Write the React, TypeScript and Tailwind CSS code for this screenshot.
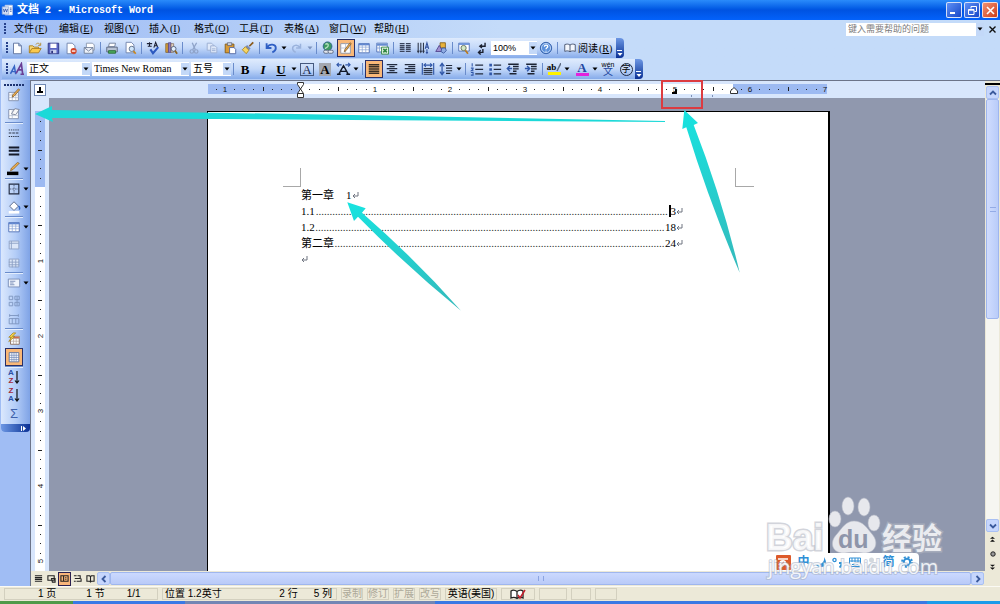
import type { ReactNode } from 'react';

const menus = [
  ['文件', 'F'],
  ['编辑', 'E'],
  ['视图', 'V'],
  ['插入', 'I'],
  ['格式', 'O'],
  ['工具', 'T'],
  ['表格', 'A'],
  ['窗口', 'W'],
  ['帮助', 'H'],
];

const INCH = 75;

function Svg({ children, size = 16 }: { children: ReactNode; size?: number }) {
  return (
    <svg width={size} height={size} viewBox="0 0 16 16" fill="none" className="block shrink-0">
      {children}
    </svg>
  );
}

const grid = 'M2 7h12M2 10h12M6 4v9M10 4v9';

const icons: Record<string, ReactNode> = {
  new: <path d="M4 2.500h6l3 3v9H4z M10 2.500v3h3" fill="#fff" stroke="#5a6f9c" />,
  open: (
    <>
      <path d="M1.500 13.500v-8h4l1.500 1.500h5v2" fill="#f6d776" stroke="#a87b1c" />
      <path d="M1.500 13.500l3-5h10.500l-3 5z" fill="#fbc94c" stroke="#a87b1c" />
      <path d="M9 4c1-2 4-2 5 .500M14.500 2v3h-3" stroke="#b58a2e" />
    </>
  ),
  save: (
    <>
      <path d="M2.500 2.500h12v12h-12z" fill="#5b66c4" stroke="#2c337f" />
      <path d="M5 3h7v5H5z" fill="#fff" />
      <path d="M5 10h7v4H5z" fill="#c9d0ee" />
      <path d="M6 11h2v3H6z" fill="#2c337f" />
    </>
  ),
  permission: (
    <>
      <path d="M3.500 2.500h6l3 3v9h-9z" fill="#fff" stroke="#6b7fa8" />
      <circle cx="11" cy="11.500" r="3.500" fill="#d2452b" />
      <path d="M9 11.500h4" stroke="#fff" strokeWidth="1.500" />
    </>
  ),
  mail: (
    <>
      <path d="M5 2.500h7l2 2v6H5z" fill="#fff" stroke="#8793aa" />
      <path d="M2.500 7.500h10v6.500h-10z" fill="#eef2fa" stroke="#6d7b96" />
      <path d="M2.500 7.500l5 4 5-4" stroke="#6d7b96" />
    </>
  ),
  print: (
    <>
      <path d="M5 2.500h7l-1 4H4z" fill="#fff" stroke="#6d7b96" />
      <path d="M2 7h12v5.500H2z" fill="#b8c3d4" stroke="#56627a" />
      <path d="M4 11h8v3H4z" fill="#4aa65a" stroke="#2b6e3a" />
    </>
  ),
  preview: (
    <>
      <path d="M3.500 1.500h6l3 3v9h-9z" fill="#fff" stroke="#6b7fa8" />
      <circle cx="10" cy="9" r="3" fill="#cfe6fb" stroke="#5c6b86" />
      <path d="M12 11.500l2.500 3" stroke="#c8861e" strokeWidth="2" />
    </>
  ),
  spell: (
    <>
      <path d="M1 3h6M4 1.500V6.500M2 6h4.500M9 7.500l2-6 2.500 6M9.500 5.500h3.500" stroke="#1b1f33" strokeWidth="1.200" />
      <path d="M5 9.500l3 4.500 6-7" stroke="#2c59c0" strokeWidth="2.400" />
    </>
  ),
  research: (
    <>
      <path d="M2 3h3v10H2z" fill="#d7a03a" stroke="#78591f" strokeWidth=".8" />
      <path d="M5 2h3v11H5z" fill="#8f7ac0" stroke="#4b3c80" strokeWidth=".8" />
      <path d="M8 3h3v10H8z" fill="#e3d2c3" stroke="#806a58" strokeWidth=".8" />
      <circle cx="11" cy="9" r="2.800" fill="#e3f0fd" stroke="#4c5b78" />
      <path d="M12.500 11l2.500 3.500" stroke="#8a6420" strokeWidth="2" />
    </>
  ),
  cut: (
    <>
      <path d="M6 2l3.500 8M11 2L6.500 10" stroke="#8fa3c8" strokeWidth="1.500" />
      <circle cx="5.500" cy="12" r="2" stroke="#8fa3c8" strokeWidth="1.400" />
      <circle cx="10.500" cy="12" r="2" stroke="#8fa3c8" strokeWidth="1.400" />
    </>
  ),
  copy: (
    <>
      <path d="M2.500 2.500h5l2 2v6h-7z" fill="#dfe9fa" stroke="#98acd0" />
      <path d="M6.500 5.500h5l2 2v6h-7zM8 9h4M8 11h4" fill="#dfe9fa" stroke="#98acd0" />
    </>
  ),
  paste: (
    <>
      <path d="M2.500 3.500h10v10h-10z" fill="#d79a36" stroke="#835a14" />
      <path d="M5 2h5v3H5z" fill="#dadde6" stroke="#50566a" strokeWidth=".8" />
      <path d="M7.500 7.500h5l2 2v5h-7z" fill="#fff" stroke="#4c64a4" />
    </>
  ),
  painter: (
    <>
      <path d="M14 1.500L9.500 6" stroke="#8a5a1b" strokeWidth="2" />
      <path d="M7 4.500l4 4-2 2-4-4z" fill="#7789b4" />
      <path d="M5 6.500l4 4-3 4L1.500 10z" fill="#f7d663" stroke="#a8831e" />
    </>
  ),
  undo: <path d="M3 2.500v5.500h5.500M3.500 7.500c3-5 10-4 10 .500 0 2.500-1.500 4-4 5" stroke="#2f5fc4" strokeWidth="2.100" />,
  redo: <path d="M12 3v5H7M11.500 7.500c-3-4-8.500-3-8.500 1 0 2 1.500 3.500 3.500 4.500" stroke="#9ab2dc" strokeWidth="1.700" />,
  link: (
    <>
      <circle cx="7.500" cy="6" r="5" fill="#3d9a62" stroke="#2b5f8c" />
      <path d="M5 4c2-2 4 0 3 2s-3 1-3 3" stroke="#b6e2c2" strokeWidth="1.500" />
      <rect x="3" y="10.500" width="6" height="3.500" rx="1.700" stroke="#59657d" fill="#e4e8ef" />
      <rect x="8" y="10.500" width="6" height="3.500" rx="1.700" stroke="#59657d" fill="#e4e8ef" />
    </>
  ),
  borders: (
    <>
      <path d="M2 3h11v11H2z" fill="#fff" stroke="#8b93a8" />
      <path d="M2 8h11M7.500 3v11" stroke="#b7bfd0" />
      <path d="M14 3l-6 8-2 1.500.500-2.500 6-8z" fill="#f0b352" stroke="#74502a" strokeWidth=".8" />
    </>
  ),
  table: (
    <>
      <path d="M2 3h12v10.500H2z" fill="#fff" stroke="#4a6cb4" />
      <path d="M2 3h12v2H2z" fill="#5f86d0" />
      <path d={grid} stroke="#86a2d6" strokeWidth=".8" />
    </>
  ),
  excel: (
    <>
      <path d="M2 2.500h12v10H2z" fill="#fff" stroke="#4a6cb4" />
      <path d="M2 3h12v2H2zM2 8h6M5 5v7" fill="#5f86d0" stroke="#86a2d6" />
      <path d="M7.500 7h8v8h-8z" fill="#e6f5e4" stroke="#2f8540" />
      <path d="M9.500 9l4 4M13.500 9l-4 4" stroke="#2f8540" strokeWidth="1.800" />
    </>
  ),
  columns: <path d="M2 3h5.500M2 5.200h5.500M2 7.400h5.500M2 9.600h5.500M2 11.800h5.500M9 3h5.500M9 5.200h5.500M9 7.400h5.500M9 9.600h5.500M9 11.800h5.500" stroke="#39435c" strokeWidth="1.500" />,
  textdir: (
    <>
      <path d="M2.500 2v10M5.500 2v10M8.500 2v10M1.500 11l1 2 1-2M4.500 11l1 2 1-2M7.500 11l1 2 1-2" stroke="#2b3345" strokeWidth="1.200" />
      <path d="M10.500 9l2-7 2 7M11.500 7h2M12.500 9.500v5M11.500 12.500l1 1.500 1-1.500" stroke="#2f4f9c" strokeWidth="1.200" />
    </>
  ),
  drawing: (
    <>
      <path d="M7 2h6v6H7z" fill="#e9b23b" stroke="#82611c" />
      <path d="M2 12l4-7 4 7z" fill="#9f8fd0" stroke="#51428c" />
      <path d="M9 8h4l1 3-3 3-3-2z" fill="#8fabe3" stroke="#39579c" />
    </>
  ),
  docmap: (
    <>
      <path d="M2 2.500h12v9H2z" fill="#fff" stroke="#4a6cb4" />
      <path d="M2 2.500h12v2H2z" fill="#6b93dc" />
      <circle cx="7.500" cy="8" r="3" fill="#d4e9c6" stroke="#5b6a58" />
      <path d="M9.500 10.500l3 4" stroke="#b9791e" strokeWidth="2" />
    </>
  ),
  marks: <path d="M11.500 2v4H6M8 4L5.500 6 8 8M9 9v4H4M6.500 10.500L4 13l2.500 2.500" stroke="#1b2030" strokeWidth="1.600" />,
  help: (
    <>
      <circle cx="8" cy="8" r="6.500" fill="#5b90dc" stroke="#2f5aa6" />
      <circle cx="8" cy="8" r="5.200" stroke="#dbe9fc" strokeWidth=".8" />
      <path d="M6.200 6.500C6.200 4 10 4.200 10 6.300c0 1.400-2 1.500-2 3M8 11v1" stroke="#fff" strokeWidth="1.500" />
    </>
  ),
  read: <path d="M1 3.500c2.500-1 5-1 7 .500 2-1.500 4.500-1.500 7-.500v9c-2.500-1-5-1-7 .500-2-1.500-4.500-1.500-7-.500zM8 4v9" fill="#f4f7fd" stroke="#44506b" strokeWidth="1.200" />,
  styles: (
    <>
      <path d="M.5 13.500L5 5l1.500 9M2.500 11h4" stroke="#3764c4" strokeWidth="1.700" />
      <path d="M7 13l6-11 1.500 12M9.500 9h4.500M12 14h4" stroke="#6b3f96" strokeWidth="1.900" />
    </>
  ),
  justify: <path d="M2 3h12M2 5h12M2 7h12M2 9h12M2 11h12M2 13h12" stroke="#3a3027" strokeWidth="1.200" />,
  center: <path d="M2 3h12M5 5.300h6M2 7.600h12M5 9.900h6M2 12.200h12" stroke="#222b3e" strokeWidth="1.300" />,
  right: <path d="M2 3h12M6 5.300h8M2 7.600h12M6 9.900h8M2 12.200h12" stroke="#222b3e" strokeWidth="1.300" />,
  distribute: (
    <>
      <path d="M1.500 1v13.500M14.500 1v13.500M3 3.500h10M5.500 1.500L3.500 3.500 5.500 5.500M10.500 1.500L12.500 3.500 10.500 5.500" stroke="#2f56a8" strokeWidth="1.300" />
      <path d="M3 7.500h10M3 9.700h10M3 11.900h10M3 14h10" stroke="#2c3548" strokeWidth="1.300" />
    </>
  ),
  spacing: (
    <>
      <path d="M3.500 2v12M1 5l2.500-3.500L6 5M1 11l2.500 3.500L6 11" stroke="#2f56a8" strokeWidth="1.400" />
      <path d="M8 4h7M8 7h7M8 10h7M8 13h5" stroke="#222b3e" strokeWidth="1.300" />
    </>
  ),
  numbering: (
    <>
      <path d="M2.500 1.500v3.500M1 7h2.500v1L1.500 10H4M1 12h2.500v3H1" stroke="#2f56a8" strokeWidth="1.200" />
      <path d="M6 3.500h9M6 8.500h9M6 13.500h9" stroke="#222b3e" strokeWidth="1.400" />
    </>
  ),
  bullets: (
    <>
      <path d="M1.500 2h3v3h-3zM1.500 7h3v3h-3zM1.500 12h3v3h-3z" fill="#2f56a8" />
      <path d="M6.500 3.500h8.500M6.500 8.500h8.500M6.500 13.500h8.500" stroke="#222b3e" strokeWidth="1.400" />
    </>
  ),
  outdent: (
    <>
      <path d="M2.500 2.500h12M8 5.200h6.500M8 7.900h6.500M8 10.600h4M4 13.500h8" stroke="#1d2434" strokeWidth="1.600" />
      <path d="M7 7.500H1.500M4.500 4.500l-3 3 3 3" stroke="#2f56a8" strokeWidth="1.600" />
    </>
  ),
  indent: (
    <>
      <path d="M2.500 2.500h12M8 5.200h6.500M8 7.900h6.500M8 10.600h4M4 13.500h8" stroke="#1d2434" strokeWidth="1.600" />
      <path d="M1 7.500h5.500M3.500 4.500l3 3-3 3" stroke="#2f56a8" strokeWidth="1.600" />
    </>
  ),
  drawTable: (
    <>
      <path d="M2 5h11v9.500H2z" fill="#fff" stroke="#7b8aa9" />
      <path d="M2 8h11M2 11h11M6 5v9M10 5v9" stroke="#aab6cc" strokeWidth=".8" />
      <path d="M14.500 2L8 9.500l-2 1 .500-2.500 6.500-7z" fill="#efb04e" stroke="#7b5523" strokeWidth=".8" />
    </>
  ),
  eraser: (
    <>
      <path d="M2 4h11v10.500H2z" fill="#fff" stroke="#7b8aa9" />
      <path d="M2 11h11M6 4v10" stroke="#aab6cc" strokeWidth=".8" />
      <path d="M9 3l5 1-4 6-5-1z" fill="#f7f7f7" stroke="#78829a" />
    </>
  ),
  lineStyle: (
    <>
      <path d="M2 4.500h12" stroke="#2c3548" strokeDasharray="1.500 1" />
      <path d="M2 8h12" stroke="#2c3548" strokeWidth="1.400" strokeDasharray="3 1" />
      <path d="M2 12h12" stroke="#2c3548" strokeWidth="1.400" strokeDasharray="1.500 1" />
    </>
  ),
  lineWeight: <path d="M2 4h12M2 7.800h12M2 12h12" stroke="#151b2b" strokeWidth="2.200" />,
  pen: (
    <>
      <path d="M14 1.500L7 8.500l-3 1.500 1-3L12 .500z" fill="#efb04e" stroke="#7b5523" strokeWidth=".8" />
      <path d="M0 11h13v4H0z" fill="#000" />
    </>
  ),
  outline: (
    <>
      <path d="M2.500 2.500h11v11h-11z" stroke="#222b40" strokeWidth="1.300" />
      <path d="M8 3v10M3 8h10" stroke="#4b5875" strokeDasharray="2 1" />
    </>
  ),
  fill: (
    <>
      <path d="M3 7l5-5 5 5-5 5z" fill="#fff" stroke="#4f5f80" />
      <path d="M13 7c2 1 1.500 3 1 4" stroke="#3067c7" strokeWidth="1.600" />
      <path d="M2 12.500h12v3H2z" fill="#fff" />
    </>
  ),
  merge: <path d="M2.500 3.500h11v9h-11zM2.500 6h11M5 3.500v9" fill="#dde7f8" stroke="#8b9fc4" />,
  split: (
    <>
      <path d="M2.500 3.500h11v9h-11z" fill="#dde7f8" stroke="#8b9fc4" />
      <path d={grid} stroke="#8b9fc4" />
    </>
  ),
  align: <path d="M1.500 3.500h13v9h-13zM3.500 6h6M3.500 8h4M3.500 10h5" fill="#eef3fc" stroke="#7388b3" />,
  rows: <path d="M2.500 2.500h4v4h-4zM2.500 9.500h4v4h-4zM9 2.500h5v4H9zM9 9.500h5v4H9zM11.500 3v10" stroke="#7c93be" />,
  cols: <path d="M2.500 7.500h11v6h-11zM6 7.500v6M10 7.500v6M3 4h10M3 2.500v3M13 2.500v3" stroke="#7c93be" />,
  autoFormat: (
    <>
      <path d="M4 5h10v9H4z" fill="#fff" stroke="#8a6a5a" />
      <path d="M4 5h10v2.500H4zM4 10.500h10M7.500 7v7M10.500 7v7" fill="#d36a53" stroke="#b3a29a" strokeWidth=".8" />
      <path d="M7 1L2 6h3l-3 5 7-6H6l4-4z" fill="#f9d84e" stroke="#a17c18" strokeWidth=".8" />
    </>
  ),
  gridlines: (
    <>
      <path d="M2.500 3h11v10.500h-11z" fill="#fff" stroke="#5a6f9c" />
      <path d="M2.500 6h11M2.500 8.500h11M2.500 11h11M5.500 3v10M8 3v10M10.500 3v10" stroke="#6e86b8" strokeWidth=".8" />
    </>
  ),
  doc: (
    <>
      <path d="M5 1.500h9v12H5z" fill="#fff" stroke="#b8c8ea" />
      <path d="M1.500 3.500h8v9h-8z" fill="#dce7fa" stroke="#8fa7d8" />
      <path d="M3 6l1 4 1.500-4L7 10l1-4M11 5h2M11 7h2M11 9h2" stroke="#2b50a5" />
    </>
  ),
};

function ToolButton({ name, label, active }: { name: string; label: string; active?: boolean }) {
  return (
    <button
      aria-label={label}
      className={
        active
          ? 'flex h-[18px] w-[18px] shrink-0 items-center justify-center border border-[#2a2f66] bg-[#f9b878]'
          : 'flex h-[18px] w-[18px] shrink-0 items-center justify-center'
      }
    >
      <Svg size={14}>{icons[name]}</Svg>
    </button>
  );
}

function Arrow({ muted }: { muted?: boolean }) {
  return (
    <svg width="6" height="4" viewBox="0 0 6 4" className="shrink-0">
      <path d="M.5 .5h5L3 3.500z" fill={muted ? '#7d93be' : '#000'} />
    </svg>
  );
}

function DropArrow({ label, muted }: { label: string; muted?: boolean }) {
  return (
    <button aria-label={label} className="flex h-4 w-2 shrink-0 items-center justify-center">
      <Arrow muted={muted} />
    </button>
  );
}

function Sep() {
  return (
    <div className="flex w-[5px] shrink-0 justify-center">
      <div className="h-3 w-px bg-[#6a8ccb]" />
    </div>
  );
}

function Grip() {
  return (
    <svg width="2" height="12" viewBox="0 0 2 12" className="shrink-0">
      <path d="M0 0h2v2H0zM0 3h2v2H0zM0 6h2v2H0zM0 9h2v2H0z" fill="#27418a" />
    </svg>
  );
}

function Picker({ label, value, className }: { label: string; value: string; className: string }) {
  return (
    <label className={`flex h-[14px] shrink-0 items-center bg-white ${className}`}>
      <select aria-label={label} className="h-[14px] min-w-0 flex-1 appearance-none bg-white pl-[2px] leading-[14px] outline-none">
        <option>{value}</option>
      </select>
      <span className="flex h-3 w-2 items-center justify-center bg-[#c3d8f8]">
        <Arrow />
      </span>
    </label>
  );
}

function ToolbarEnd() {
  return (
    <button aria-label="工具栏选项" className="flex h-full w-2 shrink-0 items-end justify-center rounded-r-sm bg-linear-to-b from-[#6d97e4] to-[#0b2f94] pb-[2px]">
      <svg width="6" height="6" viewBox="0 0 6 6">
        <path d="M0 0h5v1H0zM.5 3h5L3 6z" fill="#fff" />
      </svg>
    </button>
  );
}

const toolbarClass = 'flex h-5 items-center self-start rounded-r-sm bg-linear-to-b from-[#dfebfd] via-[#c3d8f9] to-[#86abea] pl-1';

function StandardToolbar() {
  return (
    <div className={toolbarClass}>
      <Grip />
      <ToolButton name="new" label="新建" />
      <ToolButton name="open" label="打开" />
      <ToolButton name="save" label="保存" />
      <ToolButton name="permission" label="权限" />
      <ToolButton name="mail" label="电子邮件" />
      <Sep />
      <ToolButton name="print" label="打印" />
      <ToolButton name="preview" label="打印预览" />
      <Sep />
      <ToolButton name="spell" label="拼写和语法" />
      <ToolButton name="research" label="信息检索" />
      <Sep />
      <ToolButton name="cut" label="剪切" />
      <ToolButton name="copy" label="复制" />
      <ToolButton name="paste" label="粘贴" />
      <ToolButton name="painter" label="格式刷" />
      <Sep />
      <ToolButton name="undo" label="撤消" />
      <DropArrow label="撤消列表" />
      <ToolButton name="redo" label="恢复" />
      <DropArrow label="恢复列表" muted />
      <Sep />
      <ToolButton name="link" label="超链接" />
      <ToolButton name="borders" label="表格和边框" active />
      <ToolButton name="table" label="插入表格" />
      <ToolButton name="excel" label="插入 Excel 工作表" />
      <Sep />
      <ToolButton name="columns" label="分栏" />
      <ToolButton name="textdir" label="更改文字方向" />
      <ToolButton name="drawing" label="绘图" />
      <Sep />
      <ToolButton name="docmap" label="文档结构图" />
      <ToolButton name="marks" label="显示/隐藏编辑标记" />
      <Picker label="显示比例" value="100%" className="w-[46px] text-[9px]" />
      <ToolButton name="help" label="帮助" />
      <Sep />
      <button className="flex items-center gap-[2px] pr-1 pl-1 text-[10px]">
        <Svg size={12}>{icons.read}</Svg>
        <span>
          阅读<span className="ml-px font-['Liberation_Serif',serif]">(<u>R</u>)</span>
        </span>
      </button>
      <ToolbarEnd />
    </div>
  );
}

function Letter({ label, children }: { label: string; children: ReactNode }) {
  return (
    <button
      aria-label={label}
      className="flex h-[18px] w-[18px] shrink-0 items-center justify-center font-['Liberation_Serif','Noto_Sans_CJK_SC',serif] text-[13px] leading-none"
    >
      {children}
    </button>
  );
}

function FormattingToolbar() {
  return (
    <div className={toolbarClass}>
      <Grip />
      <ToolButton name="styles" label="格式窗格" />
      <Picker label="样式" value="正文" className="ml-px w-[63px] text-[10px]" />
      <Picker label="字体" value="Times New Roman" className="ml-[2px] w-[97px] font-['Liberation_Serif',serif] text-[10px]" />
      <Picker label="字号" value="五号" className="ml-[2px] w-10 text-[10px]" />
      <Sep />
      <Letter label="加粗"><b>B</b></Letter>
      <Letter label="倾斜"><b><i>I</i></b></Letter>
      <Letter label="下划线"><b><u>U</u></b></Letter>
      <DropArrow label="下划线样式" />
      <Letter label="字符边框">
        <span className="border border-[#46597f] px-[1px] leading-[11px] text-[#1c2b50]">A</span>
      </Letter>
      <Letter label="字符底纹">
        <span className="bg-[#a3a7b0] px-[1px] leading-[13px] font-bold">A</span>
      </Letter>
      <button aria-label="字符缩放" className="flex h-[18px] w-[18px] items-center justify-center">
        <Svg size={15}>
          <path d="M3 13L8 4l5 9M5 10h6M1 13h4M11 13h4" stroke="#111827" strokeWidth="1.500" />
          <path d="M1 3h5M3 1L1 3l2 2M10 3h5M13 1l2 2-2 2" stroke="#2f56a8" strokeWidth="1.200" />
        </Svg>
      </button>
      <DropArrow label="字符缩放比例" />
      <Sep />
      <ToolButton name="justify" label="两端对齐" active />
      <ToolButton name="center" label="居中" />
      <ToolButton name="right" label="右对齐" />
      <ToolButton name="distribute" label="分散对齐" />
      <ToolButton name="spacing" label="行距" />
      <DropArrow label="行距列表" />
      <Sep />
      <ToolButton name="numbering" label="编号" />
      <ToolButton name="bullets" label="项目符号" />
      <ToolButton name="outdent" label="减少缩进量" />
      <ToolButton name="indent" label="增加缩进量" />
      <Sep />
      <button aria-label="突出显示" className="flex h-[18px] w-[18px] flex-col items-center justify-center font-['Liberation_Serif',serif] text-[9px] leading-[9px] font-bold">
        <span className="flex">
          ab
          <svg width="5" height="9" viewBox="0 0 5 9">
            <path d="M5 0L1 8" stroke="#5d6b83" strokeWidth="1.500" />
          </svg>
        </span>
        <span className="h-[3px] w-[13px] bg-[#fff200]" />
      </button>
      <DropArrow label="突出显示颜色" />
      <button aria-label="字体颜色" className="ml-[2px] flex h-[18px] w-[18px] flex-col items-center justify-center font-['Liberation_Serif',serif] text-[13px] leading-[11px] font-bold text-[#2447a0]">
        A
        <span className="h-[3px] w-[13px] bg-[#e322dc]" />
      </button>
      <DropArrow label="字体颜色列表" />
      <button aria-label="拼音指南" className="flex h-[18px] w-[18px] flex-col items-center justify-center text-[7px] leading-[5px]">
        wén
        <span className="text-[10px] leading-[10px] text-[#2447a0]">文</span>
      </button>
      <button aria-label="带圈字符" className="flex h-[18px] w-[18px] items-center justify-center">
        <span className="flex h-[13px] w-[13px] items-center justify-center rounded-full border border-[#1f2a44] text-[9px] leading-none">字</span>
      </button>
      <ToolbarEnd />
    </div>
  );
}

function TitleBar() {
  return (
    <header className="flex h-5 shrink-0 items-center bg-linear-to-b from-[#2a8bfb] via-[#0053e1] to-[#0362fb] pr-[2px] pl-px">
      <Svg size={13}>{icons.doc}</Svg>
      <h1 className="ml-[3px] flex-1 font-['Liberation_Mono','Noto_Sans_CJK_SC',monospace] text-[10px] font-bold whitespace-pre text-white">
        <span className="text-[11px]">文档</span> 2 - Microsoft Word
      </h1>
      <div className="flex gap-[2px]">
        <button aria-label="最小化" className="flex h-4 w-4 items-end justify-start rounded-xs border border-white/80 bg-linear-to-br from-[#5f8ff5] to-[#1846c8] p-[3px]">
          <span className="h-[2px] w-[5px] bg-white" />
        </button>
        <button aria-label="还原" className="flex h-4 w-4 items-center justify-center rounded-xs border border-white/80 bg-linear-to-br from-[#5f8ff5] to-[#1846c8]">
          <svg width="9" height="9" viewBox="0 0 9 9" fill="none" stroke="#fff">
            <path d="M3 2.500v-2h5.500v5h-2M.5 3.500H6v5H.5zM.5 4.200H6" />
          </svg>
        </button>
        <button aria-label="关闭" className="flex h-4 w-4 items-center justify-center rounded-xs border border-white/80 bg-linear-to-br from-[#f09070] to-[#cc3a12]">
          <svg width="9" height="9" viewBox="0 0 9 9" stroke="#fff" strokeWidth="1.600">
            <path d="M1 1l7 7M8 1L1 8" />
          </svg>
        </button>
      </div>
    </header>
  );
}

function MenuBar() {
  return (
    <nav className="flex h-[18px] shrink-0 items-center pl-1">
      <Grip />
      <div className="flex flex-1 pl-2">
        {menus.map(([name, key]) => (
          <button key={key} className="w-[45px] text-left text-[10px] leading-[16px] whitespace-nowrap">
            {name}
            <span className="ml-px font-['Liberation_Serif',serif]">(<u>{key}</u>)</span>
          </button>
        ))}
      </div>
      <div className="flex h-[13px] items-center bg-white">
        <input
          aria-label="键入需要帮助的问题"
          placeholder="键入需要帮助的问题"
          className="h-[13px] w-[130px] bg-white pl-[2px] text-[9px] leading-[13px] outline-none placeholder:text-[#7c7c7c]"
        />
        <button aria-label="问题列表" className="flex h-[13px] w-2 items-center justify-center bg-[#c3d8f8]">
          <Arrow />
        </button>
      </div>
      <button aria-label="关闭文档" className="mr-1 ml-[5px] flex h-3 w-[7px] items-center">
        <svg width="7" height="7" viewBox="0 0 7 7" stroke="#111" strokeWidth="1.400">
          <path d="M.5 .5l6 6M6.500 .5l-6 6" />
        </svg>
      </button>
    </nav>
  );
}

const sideGroups: { name: string; label: string; drop?: boolean; active?: boolean }[][] = [
  [{ name: 'drawTable', label: '绘制表格' }, { name: 'eraser', label: '擦除' }],
  [{ name: 'lineStyle', label: '线型' }, { name: 'lineWeight', label: '粗细' }, { name: 'pen', label: '边框颜色', drop: true }],
  [{ name: 'outline', label: '外侧框线', drop: true }, { name: 'fill', label: '底纹颜色', drop: true }],
  [{ name: 'table', label: '插入表格', drop: true }, { name: 'merge', label: '合并单元格' }, { name: 'split', label: '拆分单元格' }],
  [{ name: 'align', label: '对齐', drop: true }, { name: 'rows', label: '平均分布各行' }, { name: 'cols', label: '平均分布各列' }],
  [{ name: 'autoFormat', label: '自动套用格式' }, { name: 'gridlines', label: '显示虚框', active: true }],
];

function SortButton({ first, second, label }: { first: string; second: string; label: string }) {
  return (
    <button aria-label={label} className="flex h-[18px] w-[18px] items-center justify-center text-[8px] leading-[8px] font-bold">
      <span className="flex flex-col">
        <span className={first === 'A' ? 'text-[#2b50a5]' : 'text-[#a02a3c]'}>{first}</span>
        <span className={second === 'A' ? 'text-[#2b50a5]' : 'text-[#a02a3c]'}>{second}</span>
      </span>
      <svg width="6" height="13" viewBox="0 0 6 13" fill="none" stroke="#111">
        <path d="M3 0v12M1 9.500L3 12l2-2.500" strokeWidth="1.200" />
      </svg>
    </button>
  );
}

function SideToolbar() {
  return (
    <aside className="w-[30px] shrink-0 bg-[#a0bdf4]">
      <div className="ml-px flex flex-col rounded-b-sm bg-linear-to-r from-[#dbe8fd] via-[#b4cdf7] to-[#7fa3e6] pt-1">
        <svg width="22" height="2" viewBox="0 0 22 2" className="ml-[3px]">
          <path d="M0 0h2v2H0zM3 0h2v2H3zM6 0h2v2H6zM9 0h2v2H9zM12 0h2v2h-2zM15 0h2v2h-2zM18 0h2v2h-2z" fill="#1c3270" />
        </svg>
        {sideGroups.map((group) => (
          <div key={group[0].name} className="flex flex-col pl-1">
            {group.map((item) => (
              <div key={item.name} className="flex items-center">
                <ToolButton name={item.name} label={item.label} active={item.active} />
                {item.drop && <Arrow />}
              </div>
            ))}
            <div className="h-[2px] w-[18px] border-t border-[#6a8ccb] bg-[#e4eefd]" />
          </div>
        ))}
        <div className="flex flex-col pl-1">
          <SortButton first="A" second="Z" label="升序排序" />
          <SortButton first="Z" second="A" label="降序排序" />
          <button aria-label="自动求和" className="h-[18px] w-[18px] text-[13px] leading-none text-[#3f62ac]">Σ</button>
        </div>
        <button aria-label="工具栏选项" className="mt-[2px] flex h-2 items-center justify-end rounded-b-sm bg-linear-to-r from-[#6d97e4] to-[#0b2f94] pr-1">
          <svg width="5" height="5" viewBox="0 0 5 5">
            <path d="M0 0h1v5H0zM2 0l3 2.500L2 5z" fill="#fff" />
          </svg>
        </button>
      </div>
    </aside>
  );
}

function HorizontalRuler() {
  const zero = 93;
  const steps = Array.from({ length: 67 }, (_, i) => i - 10);
  return (
    <svg width="624" height="18" viewBox="0 0 624 18" className="shrink-0">
      <rect x="1" y="3" width="619" height="10" fill="#9dbaf2" />
      <rect x={zero} y="3" width="433" height="10" fill="#fff" />
      {steps.map((s) => {
        const x = zero + (s * INCH) / 8;
        if (s === 0 || s > 56) return null;
        if (s % 8 === 0) {
          return (
            <text key={s} x={x} y="11" textAnchor="middle" fontSize="8" fill="#111">
              {Math.abs(s / 8)}
            </text>
          );
        }
        return s % 4 === 0 ? (
          <rect key={s} x={Math.round(x)} y="6" width="1" height="4" fill="#222" />
        ) : (
          <rect key={s} x={Math.round(x)} y="8" width="1" height="1" fill="#222" />
        );
      })}
      <path d="M90.500 1.500h6v2l-3 4.500 3 4.500v4h-6v-4l3-4.500-3-4.500zM90.500 12.500h6" fill="#fff" stroke="#333" />
      <path d="M523.500 12.500v-2.500l3.500-3.500 3.500 3.500v2.500z" fill="#fff" stroke="#333" />
      <path d="M465 12h4V8" fill="none" stroke="#000" strokeWidth="2" />
      <path d="M484.500 14v2M505.500 14v2" stroke="#7c8fb5" />
    </svg>
  );
}

function VerticalRuler() {
  const zero = 89;
  const steps = Array.from({ length: 50 }, (_, i) => i - 7);
  return (
    <svg width="18" height="473" viewBox="0 0 18 473" className="block">
      <rect x="4" y="13" width="10" height="76" fill="#9dbaf2" />
      <rect x="4" y={zero} width="10" height="384" fill="#fff" />
      {steps.map((s) => {
        const y = Math.round(zero + (s * INCH) / 8);
        if (s === 0) return null;
        if (s % 8 === 0) {
          return (
            <text key={s} transform={`translate(12 ${y - 1}) rotate(-90)`} textAnchor="middle" fontSize="8" fill="#111">
              {s / 8}
            </text>
          );
        }
        return s % 4 === 0 ? (
          <rect key={s} x="7" y={y} width="4" height="1" fill="#222" />
        ) : (
          <rect key={s} x="9" y={y} width="1" height="1" fill="#222" />
        );
      })}
    </svg>
  );
}

function ReturnMark() {
  return (
    <svg width="7" height="8" viewBox="0 0 7 8" fill="none" stroke="#6f7480" className="shrink-0">
      <path d="M6 1v4H1M3 3L1 5l2 2" />
    </svg>
  );
}

const entries = [
  { title: '1.1', page: '3', dots: 128, cursor: true },
  { title: '1.2', page: '18', dots: 127 },
  { title: '第二章', page: '24', dots: 120 },
];

function DocumentPage() {
  return (
    <article className="ml-[158px] flex w-[623px] flex-1 flex-col border-t border-r-2 border-l border-black bg-white pt-[56px] font-['Liberation_Serif','Noto_Sans_CJK_SC',serif] text-[11px] leading-4">
      <div className="flex h-[19px] justify-between pr-[74px] pl-[75px]">
        <div className="w-[18px] border-r border-b border-[#a8a8a8]" />
        <div className="w-[19px] border-b border-l border-[#a8a8a8]" />
      </div>
      <div className="flex flex-col pl-[93px]">
        <p className="flex items-center">
          第一章<span className="ml-3">1</span>
          <ReturnMark />
        </p>
        {entries.map((e) => (
          <p key={e.title} className="flex items-center">
            <span className="flex w-[375px] justify-between whitespace-nowrap">
              <span>{e.title}</span>
              <span className="text-[#333]">{'.'.repeat(e.dots)}</span>
              <span className="flex items-center">
                {e.cursor && <span className="h-3 w-[2px] bg-black" />}
                {e.page}
              </span>
            </span>
            <ReturnMark />
          </p>
        ))}
        <p className="flex h-4 items-center">
          <ReturnMark />
        </p>
      </div>
    </article>
  );
}

const scrollButton = 'flex h-[13px] w-[13px] shrink-0 items-center justify-center rounded-xs border border-[#a9c0f3] bg-[#c6d6fd]';

function Chevron({ d }: { d: string }) {
  return (
    <svg width="8" height="8" viewBox="0 0 8 8" fill="none" stroke="#3b5a9c" strokeWidth="1.800">
      <path d={d} />
    </svg>
  );
}

function VerticalScroll() {
  return (
    <div className="flex w-[15px] shrink-0 flex-col items-center bg-[#ece9d8]">
      <div className="mb-px h-1 w-full border-b-2 border-black bg-[#ece9d8]" />
      <button aria-label="向上滚动" className={scrollButton}>
        <Chevron d="M1 5.500l3-3 3 3" />
      </button>
      <div className="flex w-[13px] flex-1 flex-col bg-[#f6f6f1]">
        <div className="flex h-[220px] items-center justify-center rounded-xs border border-[#9fb6ee] bg-linear-to-r from-[#d0dcfe] to-[#b9ccf9]">
          <span className="h-[5px] w-[6px] border-y border-[#93abe6]" />
        </div>
      </div>
      <button aria-label="向下滚动" className={scrollButton}>
        <Chevron d="M1 2.500l3 3 3-3" />
      </button>
      <div className="flex h-[54px] flex-col justify-start gap-[5px] pt-[3px]">
        <button aria-label="前一页" className="h-[9px]">
          <svg width="5" height="7" viewBox="0 0 7 8"><path d="M3.500 0L7 3H0zM3.500 4L7 7H0z" fill="#111" /></svg>
        </button>
        <button aria-label="选择浏览对象" className="h-[9px]">
          <svg width="6" height="6" viewBox="0 0 7 7"><circle cx="3.500" cy="3.500" r="2.600" fill="#999" stroke="#111" /></svg>
        </button>
        <button aria-label="下一页" className="h-[9px]">
          <svg width="5" height="7" viewBox="0 0 7 8"><path d="M0 0h7L3.500 3zM0 4h7L3.500 7z" fill="#111" /></svg>
        </button>
      </div>
    </div>
  );
}

const views = [
  { label: '普通视图', d: 'M1 2h8M1 4h8M1 6h8M1 8h8' },
  { label: 'Web 版式视图', d: 'M1 2h7v5H1zM5 5h4v4H6z' },
  { label: '页面视图', d: 'M1 2h8v6H1zM4 2v6M6 4h1M6 6h1', active: true },
  { label: '大纲视图', d: 'M1 2h3M5 2h3v3H4M2 5h2M4 8h5V5M1 8h2' },
  { label: '阅读版式', d: 'M1 2h3l1 1 1-1h3v6H6L5 9 4 8H1zM5 3v5' },
];

function BottomBar() {
  return (
    <div className="flex h-[15px] shrink-0 items-center bg-[#ece9d8] pr-px pl-px">
      {views.map((v) => (
        <button
          key={v.label}
          aria-label={v.label}
          className={v.active ? 'flex h-[14px] w-[13px] items-center justify-center border border-[#2a2050] bg-[#f8b57a]' : 'flex h-[14px] w-[13px] items-center justify-center'}
        >
          <svg width="9" height="9" viewBox="0 0 10 10" fill="none" stroke="#222" strokeWidth="1.200" className="shrink-0">
            <path d={v.d} />
          </svg>
        </button>
      ))}
      <button aria-label="向左滚动" className={scrollButton}>
        <Chevron d="M5.500 1l-3 3 3 3" />
      </button>
      <div className="flex h-[13px] flex-1 items-center justify-center rounded-xs border border-[#9fb6ee] bg-linear-to-b from-[#cbd9fe] to-[#b9caf8]">
        <span className="h-[5px] w-[6px] border-x border-[#8ba4e2]" />
      </div>
      <button aria-label="向右滚动" className={scrollButton}>
        <Chevron d="M2.500 1l3 3-3 3" />
      </button>
    </div>
  );
}

const cell = 'flex h-3 shrink-0 items-center border border-[#d3d0bf]';

function StatusBar() {
  return (
    <footer className="flex h-[15px] shrink-0 items-center gap-1 border-t border-[#fbfaf4] bg-[#ece9d8] pl-1 text-[10px] leading-none whitespace-pre">
      <div className={`${cell} w-[154px] gap-[30px] pl-[33px]`}>
        <span>1 页</span>
        <span>1 节</span>
        <span className="-ml-2">1/1</span>
      </div>
      <div className={`${cell} w-[175px] justify-between pr-1 pl-[2px]`}>
        <span className="flex-1">位置 1.2英寸</span>
        <span className="mr-4">2 行</span>
        <span>5 列</span>
      </div>
      {['录制', '修订', '扩展', '改写'].map((t) => (
        <button key={t} className={`${cell} w-[22px] justify-center text-[#aca899]`}>{t}</button>
      ))}
      <button className={`${cell} w-[52px] justify-center`}>英语(美国)</button>
      <button aria-label="拼写和语法状态" className={`${cell} w-[34px] justify-center`}>
        <svg width="16" height="11" viewBox="0 0 16 11" fill="none">
          <path d="M1 2c2-1.500 4-1 6 .500C9 1 11 .500 13 2v7c-2-1-4-1-6 .500-2-1.500-4-1.500-6-.500zM7 2.500V9" fill="#fff" stroke="#222" strokeWidth="1.300" />
          <path d="M8 6l2 3 5-8" stroke="#c3202b" strokeWidth="1.500" />
        </svg>
      </button>
      <div className={`${cell} w-7`} />
      <div className={`${cell} w-5`} />
      <div className={`${cell} w-[22px]`} />
    </footer>
  );
}

function ImeBar() {
  return (
    <div className="absolute right-[81px] bottom-[33px] flex h-[18px] w-[143px] items-center justify-between rounded-sm bg-white pr-[6px] text-[12px] leading-none font-bold text-[#2f8fd6]">
      <svg width="15" height="15" viewBox="0 0 15 15" fill="none" stroke="#fff" strokeWidth="1.600">
        <rect width="15" height="15" rx="1" fill="#dd5a2b" stroke="none" />
        <path d="M2 4h10M4 7c3-2 6-1 5 1s-4 4-6 5M8 7l5 5M3 10l4-4" />
      </svg>
      <span>中</span>
      <svg width="10" height="11" viewBox="0 0 10 11"><path d="M8 0c1 4-2 8-8 8 4 4 12 2 9.500-5C9 1.500 8.500.5 8 0z" fill="#2f8fd6" /></svg>
      <svg width="10" height="11" viewBox="0 0 10 11" fill="none">
        <circle cx="2.500" cy="3" r="1.600" stroke="#2f8fd6" strokeWidth="1.300" />
        <path d="M7 6h2.500c0 2-.5 3.500-2 4.500" stroke="#2f8fd6" strokeWidth="1.800" />
      </svg>
      <svg width="12" height="10" viewBox="0 0 12 10" fill="none" stroke="#2f8fd6">
        <path d="M.5 1h11v8.500H.5zM0 4h12M3 1v4M6 1v4M9 1v4M3 7.500h6" />
      </svg>
      <svg width="9" height="11" viewBox="0 0 9 11" fill="#d3d8de"><circle cx="4.500" cy="3" r="2.500" /><path d="M0 11c0-6 9-6 9 0z" /></svg>
      <span>简</span>
      <svg width="12" height="12" viewBox="0 0 12 12" fill="none" stroke="#2f8fd6">
        <circle cx="6" cy="6" r="3.200" strokeWidth="2" />
        <circle cx="6" cy="6" r="5" strokeWidth="1.800" strokeDasharray="2 1.930" />
      </svg>
    </div>
  );
}

function SiteMark() {
  return (
    <svg width="1000" height="604" viewBox="0 0 1000 604" className="pointer-events-none absolute top-0 left-0">
      <g fill="#fff" fillOpacity=".78" stroke="#b4b8c4" strokeOpacity=".6">
        <g strokeWidth="3" paintOrder="stroke" fontWeight="700">
          <text x="766" y="550" fontSize="37" fontFamily="Liberation Sans, sans-serif">Bai</text>
          <text x="882" y="549" fontSize="30" fontFamily="Noto Sans CJK SC, sans-serif">经验</text>
        </g>
        <ellipse cx="835" cy="519" rx="6" ry="8" />
        <ellipse cx="848" cy="506" rx="6" ry="9" />
        <ellipse cx="864" cy="507" rx="6" ry="9" />
        <ellipse cx="874" cy="523" rx="6" ry="8" />
        <path d="M854 521c-8 0-12 7-17 13-9 9-4 20 8 19 6-1 12-1 18 0 12 1 17-10 9-19-5-6-9-13-18-13z" />
      </g>
      <text x="838" y="548" fontSize="25" fontWeight="700" fill="#8e95aa" fontFamily="Liberation Sans, sans-serif">du</text>
    </svg>
  );
}

// Teaching arrows, highlight box and site address drawn over the window
function Annotations() {
  return (
    <svg width="1000" height="604" viewBox="0 0 1000 604" className="pointer-events-none absolute top-0 left-0">
      <defs>
        <linearGradient id="tailDown" x1="0" y1="0" x2="0" y2="1">
          <stop offset="0" stopColor="#17e3e0" />
          <stop offset="1" stopColor="#35b9bb" />
        </linearGradient>
      </defs>
      <path d="M35 114l17-8v4l300 5 313 6v1l-313-2-300-2 1 4z" fill="#1cd9d8" />
      <path d="M347.300 202.300l18.400 6-3.700 4.400q54 47 99 98q-54-44-103-94l-4 4.300z" fill="url(#tailDown)" />
      <path d="M684.300 110l13.700 13-4.300 2q28 72 46 147.700q-31-72-53.400-145.400l-4 1.700z" fill="url(#tailDown)" />
      <rect x="662" y="81" width="40" height="27" fill="none" stroke="#dc3b40" strokeWidth="2" />
      <text x="768" y="574" fontSize="20" fill="#fff" fillOpacity=".85" stroke="#a9b4c8" strokeOpacity=".6" strokeWidth="2" paintOrder="stroke" fontFamily="Open Sans, sans-serif">
        jingyan.baidu.com
      </text>
    </svg>
  );
}

export default function App() {
  return (
    <div className="relative flex h-screen flex-col overflow-hidden bg-linear-to-r from-[#9fbcf4] to-[#c4dbf9] to-50% font-['Liberation_Sans','Noto_Sans_CJK_SC',sans-serif] text-black">
      <TitleBar />
      <MenuBar />
      <div className="flex shrink-0 flex-col gap-px pb-px pl-[2px]">
        <StandardToolbar />
        <FormattingToolbar />
      </div>
      <div className="flex min-h-0 flex-1">
        <SideToolbar />
        <main className="flex min-w-0 flex-1 flex-col border-t border-l border-[#6c7489]">
          <div className="flex min-h-0 flex-1">
            <div className="flex min-w-0 flex-1 flex-col">
              <div className="flex h-[17px] shrink-0 items-center bg-[#d8e6fc]">
                <button aria-label="制表符" className="mr-[161px] ml-[3px] flex h-3 w-3 items-center justify-center border border-[#7089b5] bg-white">
                  <svg width="6" height="6" viewBox="0 0 6 6"><path d="M0 6V4h2V0h2v4h2v2z" fill="#000" /></svg>
                </button>
                <HorizontalRuler />
              </div>
              <div className="flex min-h-0 flex-1 overflow-hidden">
                <div className="w-[18px] shrink-0 bg-[#d8e6fc]">
                  <VerticalRuler />
                </div>
                <div className="flex min-w-0 flex-1 flex-col bg-[#9098ae] pt-[13px]">
                  <DocumentPage />
                </div>
              </div>
              <BottomBar />
            </div>
            <VerticalScroll />
          </div>
        </main>
      </div>
      <StatusBar />
      <div className="flex h-[3px] shrink-0">
        <div className="w-[73px] bg-[#4f9a49]" />
        <div className="w-[112px] bg-[#3a79e6]" />
        <div className="w-[250px] bg-[#7286b4]" />
        <div className="flex-1 bg-[#3a78e4]" />
        <div className="w-[73px] bg-[#1b9bea]" />
      </div>
      <SiteMark />
      <ImeBar />
      <Annotations />
    </div>
  );
}
